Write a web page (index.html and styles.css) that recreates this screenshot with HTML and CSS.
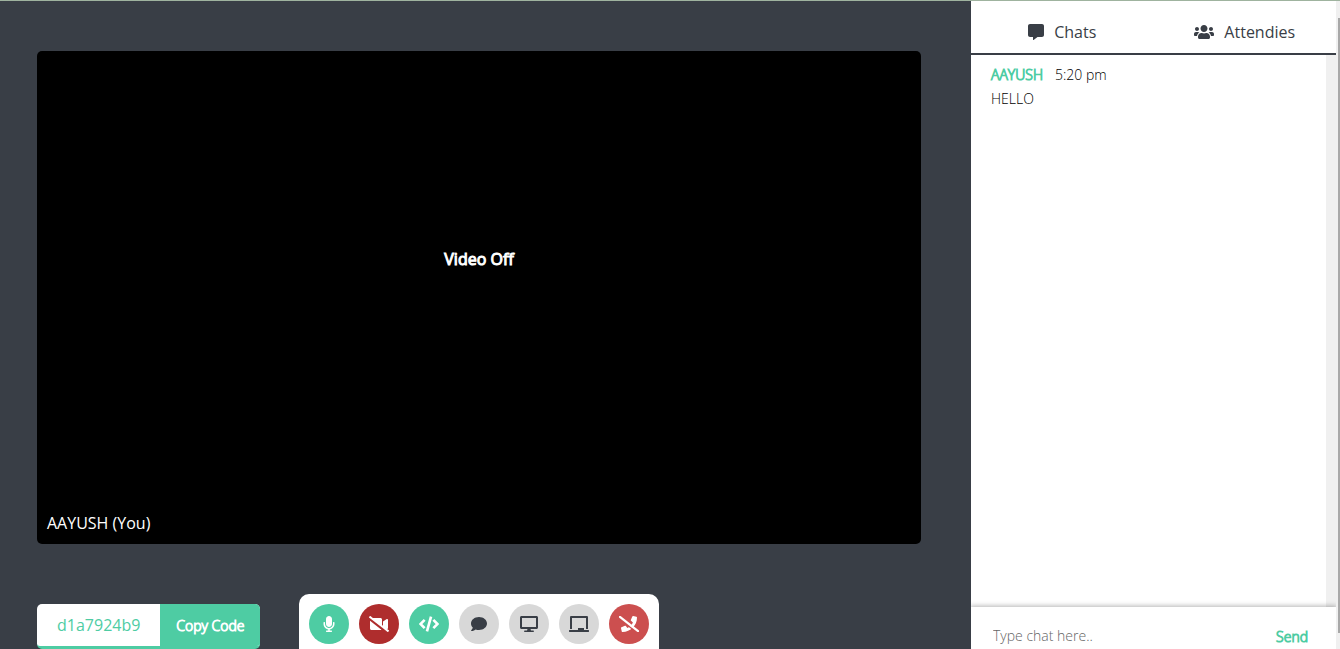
FILE: index.html
```html
<!DOCTYPE html>
<html lang="en">
<head>
<meta charset="utf-8">
<title>Meeting room</title>
<link rel="stylesheet" href="styles.css">
</head>
<body>
<div class="room">
  <main class="stage">
    <section class="video">
      <p class="video-status">Video Off</p>
      <p class="video-name">AAYUSH (You)</p>
    </section>
    <div class="dock">
      <div class="invite">
        <span class="invite-code">d1a7924b9</span>
        <button class="invite-copy" type="button">Copy Code</button>
      </div>
      <div class="controls">
        <button class="control control-on" type="button" aria-label="Microphone">
          <svg class="icon icon-mic" viewBox="0 0 352 512"><path d="M176 352c53.02 0 96-42.98 96-96V96c0-53.02-42.98-96-96-96S80 42.98 80 96v160c0 53.02 42.98 96 96 96zm160-160h-16c-8.84 0-16 7.16-16 16v48c0 74.8-64.49 134.82-140.79 127.38C96.71 376.89 48 317.11 48 250.3V208c0-8.84-7.16-16-16-16H16c-8.84 0-16 7.16-16 16v40.16c0 89.64 63.97 169.55 152 181.69V464H96c-8.84 0-16 7.16-16 16v16c0 8.84 7.16 16 16 16h160c8.84 0 16-7.16 16-16v-16c0-8.84-7.16-16-16-16h-56v-33.77C285.71 418.47 352 344.9 352 256v-48c0-8.84-7.16-16-16-16z"/></svg>
        </button>
        <button class="control control-off" type="button" aria-label="Camera">
          <svg class="icon icon-wide" viewBox="0 0 640 512"><path d="M633.8 458.1l-55-42.5c15.4-1.4 29.2-13.7 29.2-31.1v-257c0-25.5-29.1-40.4-50.4-25.8L448 177.3v137.2l-32-24.7v-178c0-26.4-21.4-47.8-47.8-47.8H123.9L45.5 3.4C38.5-2 28.5-.8 23 6.2L3.4 31.4c-5.4 7-4.2 17 2.8 22.4L42.7 82 416 370.6l178.5 138c7 5.4 17 4.2 22.5-2.8l19.6-25.3c5.5-6.9 4.2-17-2.8-22.4zM32 400.2c0 26.4 21.4 47.8 47.8 47.8h288.4c11.2 0 21.4-4 29.6-10.5L32 154.7v245.5z"/></svg>
        </button>
        <button class="control control-on" type="button" aria-label="Code editor">
          <svg class="icon icon-wide" viewBox="0 0 640 512"><path class="line" d="M180 122L48 256l132 134M460 122l132 134-132 134M385 20L255 492"/></svg>
        </button>
        <button class="control" type="button" aria-label="Chat">
          <svg class="icon" viewBox="0 0 512 512"><path d="M256 32C114.6 32 0 125.1 0 240c0 49.6 21.4 95 57 130.7C44.5 421.1 2.7 466 2.2 466.5c-2.2 2.3-2.8 5.7-1.5 8.7S4.8 480 8 480c66.3 0 116-31.8 140.6-51.4 32.7 12.3 69 19.4 107.4 19.4 141.4 0 256-93.1 256-208S397.4 32 256 32z"/></svg>
        </button>
        <button class="control" type="button" aria-label="Share screen">
          <svg class="icon icon-desktop" viewBox="0 0 576 512"><path d="M528 0H48C21.500 0 0 21.500 0 48v320c0 26.500 21.500 48 48 48h192l-16 48h-72c-13.300 0-24 10.700-24 24s10.700 24 24 24h272c13.300 0 24-10.700 24-24s-10.700-24-24-24h-72l-16-48h192c26.500 0 48-21.500 48-48V48c0-26.500-21.500-48-48-48zm-16 352H64V64h448v288z"/></svg>
        </button>
        <button class="control" type="button" aria-label="Whiteboard">
          <svg class="icon icon-wide" viewBox="0 0 640 512"><path d="M96 64h448v352h64V40c0-22-18-40-40-40H72C50 0 32 18 32 40v376h64V64zm528 384H480v-64H288v64H16c-9 0-16 7-16 16v32c0 9 7 16 16 16h608c9 0 16-7 16-16v-32c0-9-7-16-16-16z"/></svg>
        </button>
        <button class="control control-leave" type="button" aria-label="Leave call">
          <svg class="icon icon-wide" viewBox="0 0 640 512"><path d="M557.400 24.600l-104-24c-11.300-2.600-22.900 3.300-27.500 13.900l-48 112c-4.200 9.800-1.400 21.300 6.900 28l60.600 49.600c-36 76.700-98.900 140.500-177.200 177.200l-49.600-60.600c-6.800-8.300-18.200-11.100-28-6.900l-112 48c-10.700 4.700-16.600 16.300-14 27.600l24 104C91.100 504.200 100.700 512 112 512c256.100 0 464-207.500 464-464 0-11.200-7.700-20.900-18.600-23.400z"/><path class="gap" d="M0 80l600 464"/><path class="slash" d="M30 30l580 452"/></svg>
        </button>
      </div>
    </div>
  </main>
  <aside class="panel">
    <nav class="tabs">
      <button class="tab" type="button">
        <svg class="icon" viewBox="0 0 512 512"><path d="M448 0H64C28.700 0 0 28.700 0 64v288c0 35.300 28.700 64 64 64h96v84c0 9.800 11.200 15.500 19.100 9.700L304 416h144c35.300 0 64-28.700 64-64V64c0-35.300-28.700-64-64-64z"/></svg>
        Chats
      </button>
      <button class="tab" type="button">
        <svg class="icon icon-wide" viewBox="0 0 640 512"><path d="M96 224c35.300 0 64-28.700 64-64s-28.700-64-64-64-64 28.700-64 64 28.700 64 64 64zm448 0c35.300 0 64-28.700 64-64s-28.700-64-64-64-64 28.700-64 64 28.700 64 64 64zm32 32h-64c-17.600 0-33.500 7.100-45.100 18.600 40.300 22.100 68.900 62 75.100 109.400h66c17.700 0 32-14.300 32-32v-32c0-35.300-28.700-64-64-64zm-256 0c61.900 0 112-50.100 112-112S381.900 32 320 32 208 82.100 208 144s50.100 112 112 112zm76.800 32h-8.300c-20.800 10-43.900 16-68.500 16s-47.600-6-68.500-16h-8.300C179.600 288 128 339.600 128 403.200V432c0 26.500 21.500 48 48 48h288c26.500 0 48-21.500 48-48v-28.800c0-63.600-51.600-115.200-115.200-115.200zm-223.700-13.400C161.500 263.100 145.600 256 128 256H64c-35.300 0-64 28.700-64 64v32c0 17.700 14.300 32 32 32h65.900c6.300-47.400 34.900-87.300 75.200-109.400z"/></svg>
        Attendies
      </button>
    </nav>
    <div class="chat">
      <div class="messages">
        <div class="message">
          <p class="message-head"><span class="author">AAYUSH</span><time>5:20 pm</time></p>
          <p>HELLO</p>
        </div>
      </div>
      <div class="chat-scroll"></div>
    </div>
    <form class="composer">
      <input class="composer-input" type="text" placeholder="Type chat here.." aria-label="Type chat here">
      <button class="composer-send" type="button">Send</button>
    </form>
  </aside>
  <div class="page-scroll"><div class="page-thumb"></div></div>
</div>
</body>
</html>
```
FILE: styles.css
```css
* {
  box-sizing: border-box;
  margin: 0;
}

body {
  font-family: "Open Sans", "Noto Sans", sans-serif;
  font-size: 14px;
  font-weight: 300;
  line-height: 24px;
  color: #000;
  overflow: hidden;
}

button,
input {
  font: inherit;
  border: 0;
  padding: 0;
  background: none;
}

.room {
  display: flex;
  height: 100vh;
  border-top: 1px solid #9fb39f;
}

.stage {
  flex: 1;
  display: flex;
  flex-direction: column;
  gap: 50px;
  padding: 50px 50px 0 37px;
  background: #393e46;
}

.video {
  flex: 1;
  display: flex;
  flex-direction: column;
  justify-content: space-between;
  padding: 196px 10px 9px;
  border-radius: 5px;
  background: #000;
  color: #fff;
  font-size: 16px;
  font-weight: 400;
}

.video-status {
  text-align: center;
  -webkit-text-stroke: 1px #fff;
}

.dock {
  display: flex;
  align-items: flex-end;
  gap: 39px;
  height: 55px;
}

.invite {
  display: flex;
  height: 45px;
  border-radius: 5px;
  border-bottom: 3px solid #4ecca3;
  background: #fff;
  overflow: hidden;
}

.invite-code {
  padding: 9px 20px;
  color: #4ecca3;
  font-size: 16px;
  font-weight: 400;
}

.invite-copy {
  width: 100px;
  padding-top: 2px;
  background: #4ecca3;
  color: #fff;
  -webkit-text-stroke: 1px #fff;
}

.controls {
  display: flex;
  align-items: flex-start;
  gap: 10px;
  height: 55px;
  padding: 10px;
  border-radius: 10px 10px 0 0;
  background: #fff;
}

.control {
  display: grid;
  place-items: center;
  width: 40px;
  height: 40px;
  border-radius: 50%;
  background: #d8d8d8;
  color: #393e46;
}

.control-on {
  background: #4ecca3;
  color: #fff;
}

.control-off {
  background: #af2d2d;
  color: #fff;
}

.control-leave {
  background: #cc4f4f;
  color: #fff;
}

.icon {
  width: 16px;
  height: 16px;
  fill: currentColor;
}

.icon-mic {
  width: 12px;
}

.icon-desktop {
  width: 18px;
}

.icon-wide {
  width: 20px;
}

.line {
  fill: none;
  stroke: currentColor;
  stroke-width: 84;
}

.gap {
  stroke: #cc4f4f;
  stroke-width: 50;
}

.slash {
  stroke: currentColor;
  stroke-width: 70;
  stroke-linecap: round;
}

.panel {
  display: flex;
  flex-direction: column;
  width: 365px;
  background: #fff;
}

.tabs {
  display: grid;
  grid-template-columns: 1fr 1fr;
  height: 54px;
  padding-top: 10px;
  border-bottom: 2px solid #393e46;
}

.tab {
  display: flex;
  align-items: center;
  justify-content: center;
  gap: 10px;
  color: #393e46;
  font-size: 16px;
  font-weight: 400;
}

.chat {
  flex: 1;
  display: flex;
}

.messages {
  flex: 1;
  padding: 8px 20px;
}

.message-head {
  display: flex;
  gap: 12px;
}

.author {
  color: #4ecca3;
  -webkit-text-stroke: 1px #4ecca3;
}

.chat-scroll {
  width: 10px;
  background: #f0f0f0;
}

.composer {
  display: flex;
  align-items: center;
  height: 42px;
  padding: 16px 28px 0 22px;
  background: #fff;
  box-shadow: 0 0 5px 1px rgba(0, 0, 0, 0.3);
  clip-path: inset(-8px 0 0 0);
}

.composer-input {
  flex: 1;
  min-width: 0;
  outline: 0;
}

.composer-input::placeholder {
  color: #656565;
}

.composer-send {
  padding-top: 2px;
  color: #4ecca3;
  -webkit-text-stroke: 1px #4ecca3;
}

.page-scroll {
  width: 4px;
  padding: 17px 0 16px 2px;
  background: #f0f0f0;
}

.page-thumb {
  height: 100%;
  background: #a8a8a8;
}
```
